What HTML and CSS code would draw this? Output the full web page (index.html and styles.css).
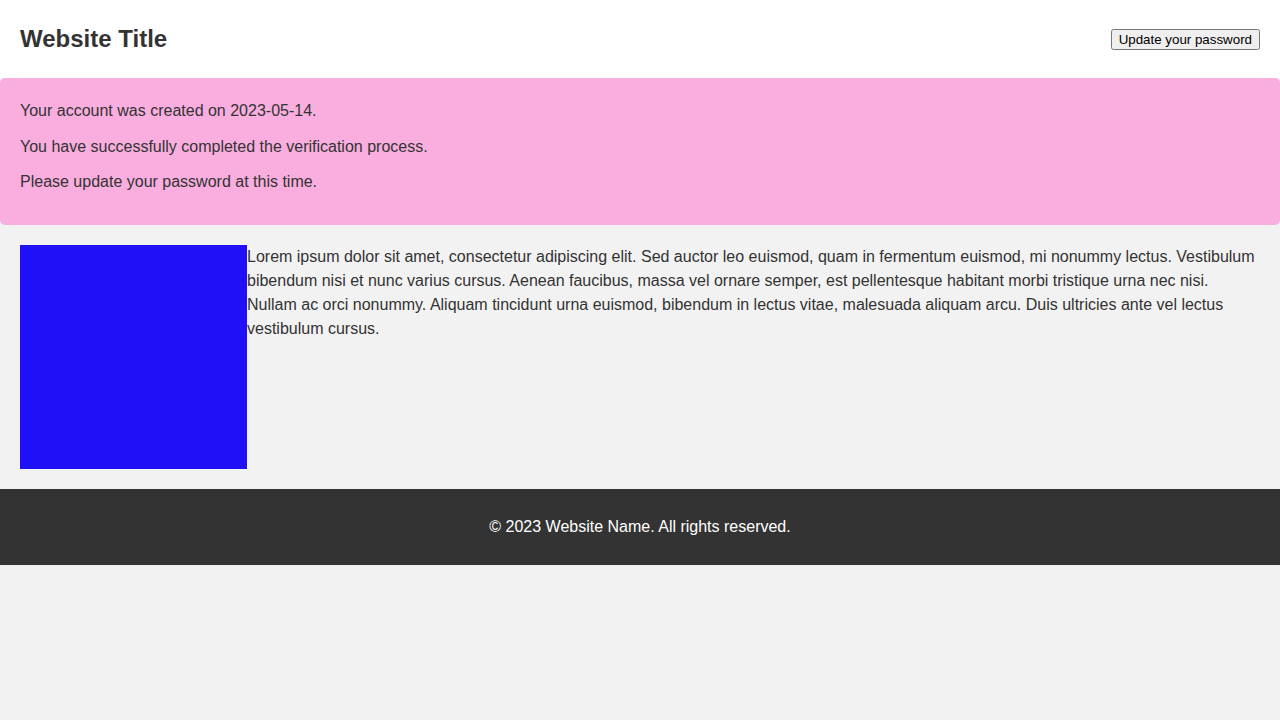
FILE: index.html
```html
<!DOCTYPE html>
<html lang="en">
<head>
<meta charset="utf-8">
<title>Website Title</title>
<link rel="stylesheet" href="styles.css">
</head>
<body>
<header class="site-header">
  <h1 class="site-title">Website Title</h1>
  <button class="update-btn" type="button">Update your password</button>
</header>
<section class="notice">
  <p>Your account was created on 2023-05-14.</p>
  <p>You have successfully completed the verification process.</p>
  <p>Please update your password at this time.</p>
</section>
<main class="content">
  <div class="media"></div>
  <p class="body-text">Lorem ipsum dolor sit amet, consectetur adipiscing elit. Sed auctor leo euismod, quam in fermentum euismod, mi nonummy lectus. Vestibulum bibendum nisi et nunc varius cursus. Aenean faucibus, massa vel ornare semper, est pellentesque habitant morbi tristique urna nec nisi. Nullam ac orci nonummy. Aliquam tincidunt urna euismod, bibendum in lectus vitae, malesuada aliquam arcu. Duis ultricies ante vel lectus vestibulum cursus.</p>
</main>
<footer class="site-footer">
  <p>&copy; 2023 Website Name. All rights reserved.</p>
</footer>
</body>
</html>
```

FILE: styles.css
```css
html, body {
  margin: 0;
  padding: 0;
}
body {
  background: #f2f2f2;
  color: #333;
  font-family: "Liberation Sans", Arial, sans-serif;
  font-size: 16px;
  line-height: 1.6;
}
.site-header {
  background: #fff;
  display: flex;
  align-items: center;
  justify-content: space-between;
  padding: 20px;
}
.site-title {
  margin: 0;
  font-size: 24px;
  font-weight: bold;
  line-height: 38px;
}
.update-btn {
  font-family: "Liberation Sans", Arial, sans-serif;
  font-size: 13.33px;
  line-height: normal;
}
.notice {
  background: #f9aedf;
  border-radius: 5px;
  padding: 20px;
}
.notice p {
  margin: 0 0 10px;
}
.content {
  display: flex;
  align-items: flex-start;
  padding: 20px;
}
.media {
  flex: 0 0 227px;
  height: 224px;
  background: #1f10f7;
}
.body-text {
  margin: 0;
  line-height: 24px;
}
.site-footer {
  background: #333;
  color: #fff;
  text-align: center;
  padding: 25px 20px;
}
.site-footer p {
  margin: 0;
  line-height: 26px;
}
```
